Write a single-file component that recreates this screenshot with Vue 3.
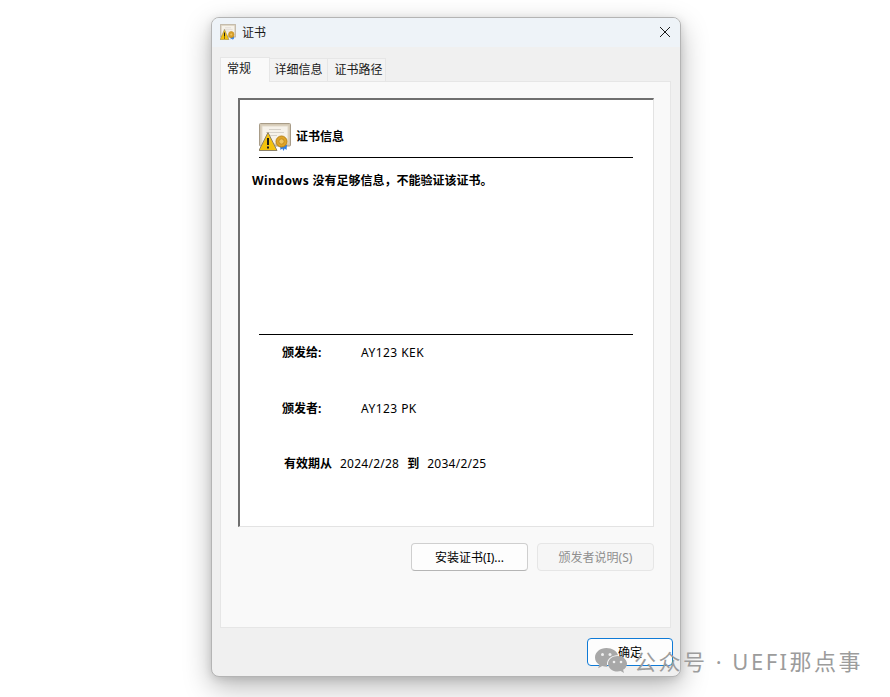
<script setup>
const rows = [
  { label: '颁发给:', value: 'AY123 KEK' },
  { label: '颁发者:', value: 'AY123 PK' },
]
</script>

<template>
  <div class="page">
    <section class="window">
      <header class="titlebar">
        <svg class="cert-small" viewBox="0 0 32 28" preserveAspectRatio="none">
          <use href="#cert" />
        </svg>
        <span class="title">证书</span>
        <svg class="close" viewBox="0 0 10 10">
          <path d="M0 0l10 10M10 0L0 10" stroke="#1a1a1a" stroke-width="1" fill="none" />
        </svg>
      </header>

      <nav class="tabs">
        <div class="tab active">常规</div>
        <div class="tab">详细信息</div>
        <div class="tab last">证书路径</div>
      </nav>

      <main class="panel">
        <div class="info">
          <div class="info-head">
            <svg class="cert-large" viewBox="0 0 32 28">
              <defs>
                <symbol id="cert" viewBox="0 0 32 28">
                  <rect x="0.5" y="0.5" width="31" height="22.500" rx="1" fill="#d4c9b4" stroke="#a89c88" />
                  <rect x="3" y="3" width="26" height="17.500" fill="#f6f2ea" stroke="#e2dac9" />
                  <path d="M10 6.500h12M7 9.500h18M7 12.500h11" stroke="#d5d1c9" stroke-width="1" />
                  <path d="M9 9.500L18 27.500H0z" fill="#f4c20d" stroke="#8d8268" stroke-width="1" stroke-linejoin="round" />
                  <path d="M8 15h2v7H8zM8 23.500h2v2H8z" fill="#1a1a1a" />
                  <path d="M21 22l.5 5 1.800-1.500 1.200 2.500 1.200-2.500 1.800 1.500.5-5z" fill="#2f7de1" />
                  <circle cx="22.500" cy="18.500" r="5.500" fill="#dfa428" stroke="#b98316" />
                  <circle cx="22.500" cy="18.500" r="2.700" fill="#f0c45e" stroke="#c48e1d" />
                </symbol>
              </defs>
              <use href="#cert" />
            </svg>
            <span class="info-title">证书信息</span>
          </div>
          <p class="warning"><span class="latin">Windows</span> 没有足够信息，不能验证该证书。</p>
          <div class="details">
            <div v-for="row in rows" :key="row.label" class="row">
              <span class="label">{{ row.label }}</span>
              <span class="value">{{ row.value }}</span>
            </div>
            <div class="validity">
              <b class="from">有效期从</b>
              <span class="date">2024/2/28</span>
              <b class="to">到</b>
              <span class="date">2034/2/25</span>
            </div>
          </div>
        </div>
        <div class="actions">
          <button class="btn">安装证书(I)...</button>
          <button class="btn disabled">颁发者说明(S)</button>
        </div>
      </main>

      <footer class="footer">
        <button class="ok">确定</button>
      </footer>
    </section>

    <div class="watermark">
      <svg class="wechat" viewBox="0 0 34 28">
        <path d="M12.500 1C6 1 1 5.200 1 10.400c0 3 1.700 5.600 4.300 7.300L4.200 21.300l4-2.200c1.300.4 2.700.6 4.300.6h1c-.3-.9-.5-1.800-.5-2.800 0-4.900 4.700-8.700 10.300-8.700h.8C22.800 3.900 18.100 1 12.500 1z" fill="#a8a8a8" />
        <path d="M33 16.700c0-4.300-4.300-7.800-9.500-7.800S14 12.400 14 16.700s4.300 7.800 9.500 7.800c1.100 0 2.200-.2 3.200-.5l3.300 2-.9-3.200c2.300-1.400 3.900-3.600 3.900-6.100z" fill="#a8a8a8" />
        <circle cx="8.500" cy="7.500" r="1.500" fill="#f0f0f0" />
        <circle cx="16" cy="7.500" r="1.500" fill="#f0f0f0" />
        <circle cx="20" cy="15" r="1.300" fill="#f0f0f0" />
        <circle cx="27" cy="15" r="1.300" fill="#f0f0f0" />
      </svg>
      <span class="wm-text">公众号 · UEFI那点事</span>
    </div>
  </div>
</template>

<style>
html, body { margin: 0; background: #fff; }
</style>

<style scoped>
.page {
  position: relative;
  width: 890px;
  height: 697px;
  overflow: hidden;
  background: #fff;
  padding: 17px 0 0 211px;
  box-sizing: border-box;
  font: 12px "Noto Sans", "Noto Sans CJK SC", sans-serif;
  color: #000;
}
.window {
  width: 470px;
  height: 660px;
  box-sizing: border-box;
  border: 1px solid #b4b4b4;
  border-radius: 8px;
  background: #f0f0f0;
  box-shadow: 0 10px 28px rgba(0, 0, 0, .28), 0 2px 8px rgba(0, 0, 0, .12);
  display: flex;
  flex-direction: column;
  overflow: hidden;
}
.titlebar {
  height: 29px;
  flex: none;
  background: #eef3f8;
  display: flex;
  align-items: center;
  box-sizing: border-box;
  padding: 0 10px 2px 8px;
  font-size: 12px;
  color: #1a1a1a;
}
.cert-small { width: 16px; height: 16px; }
.title { margin-left: 6px; }
.close { width: 10px; height: 10px; margin-left: auto; }
.tabs {
  height: 34px;
  flex: none;
  display: flex;
  align-items: flex-end;
  padding-left: 8px;
  box-sizing: border-box;
}
.tab {
  width: 58px;
  height: 23px;
  box-sizing: border-box;
  border: 1px solid #e6e6e6;
  border-bottom: 0;
  border-left: 0;
  background: #f3f3f3;
  text-align: center;
  line-height: 22px;
  color: #1a1a1a;
}
.tab.last { padding-left: 4px; }
.tab.active {
  width: 50px;
  height: 25px;
  border-left: 1px solid #e6e6e6;
  background: #f9f9f9;
  text-align: left;
  padding-left: 6px;
  line-height: 21px;
  position: relative;
  top: 1px;
}
.panel {
  margin-left: 8px;
  width: 451px;
  height: 547px;
  flex: none;
  box-sizing: border-box;
  border: 1px solid #e6e6e6;
  background: #f9f9f9;
  padding: 16px 16px 0 17px;
}
.info {
  width: 416px;
  height: 429px;
  box-sizing: border-box;
  background: #fff;
  border: 1px solid #e3e3e3;
  border-top: 2px solid #6f6f6f;
  border-left: 2px solid #6f6f6f;
  display: flex;
  flex-direction: column;
}
.info-head {
  margin: 23px 20px 0 19px;
  height: 35px;
  box-sizing: border-box;
  border-bottom: 1px solid #000;
  display: flex;
  align-items: flex-start;
}
.cert-large { width: 32px; height: 28px; }
.info-title { margin: 4px 0 0 5px; font-weight: 700; }
.warning {
  margin: 14px 0 0 12px;
  font-weight: 700;
  font-size: 12px;
  line-height: 18px;
}
.latin { letter-spacing: .45px; }
.details {
  margin: 144px 20px 0 19px;
  border-top: 1px solid #000;
  padding-top: 9px;
  display: flex;
  flex-direction: column;
  gap: 38px;
}
.row {
  display: flex;
  height: 18px;
  line-height: 18px;
  padding-left: 23px;
}
.label { width: 79px; font-weight: 700; }
.value { letter-spacing: .45px; }
.validity {
  display: flex;
  height: 18px;
  line-height: 18px;
  margin-top: -1px;
  padding-left: 25px;
}
.from { width: 56px; }
.date { letter-spacing: .25px; }
.to { margin: 0 8px 0 8px; }
.actions {
  display: flex;
  justify-content: flex-end;
  gap: 9px;
  margin-top: 16px;
  width: 416px;
}
.btn {
  width: 117px;
  height: 28px;
  box-sizing: border-box;
  font: inherit;
  color: #000;
  background: #fdfdfd;
  border: 1px solid #cfcfcf;
  border-bottom-color: #b5b5b5;
  border-radius: 4px;
  padding: 0;
}
.btn.disabled {
  color: #8f8f8f;
  background: #f6f6f6;
  border-color: #e6e6e6;
}
.footer {
  display: flex;
  justify-content: flex-end;
  padding: 10px 7px 0 0;
}
.ok {
  width: 86px;
  height: 28px;
  box-sizing: border-box;
  font: inherit;
  color: #000;
  background: #fdfdfd;
  border: 1.5px solid #0f7ad6;
  border-radius: 4px;
  padding: 0;
}
.watermark {
  position: absolute;
  left: 594px;
  top: 645px;
  display: flex;
  align-items: center;
  gap: 6px;
  color: #9c9c9c;
}
.wechat { width: 34px; height: 28px; }
.wm-text { font-size: 22px; letter-spacing: 2.500px; line-height: 32px; }
</style>
